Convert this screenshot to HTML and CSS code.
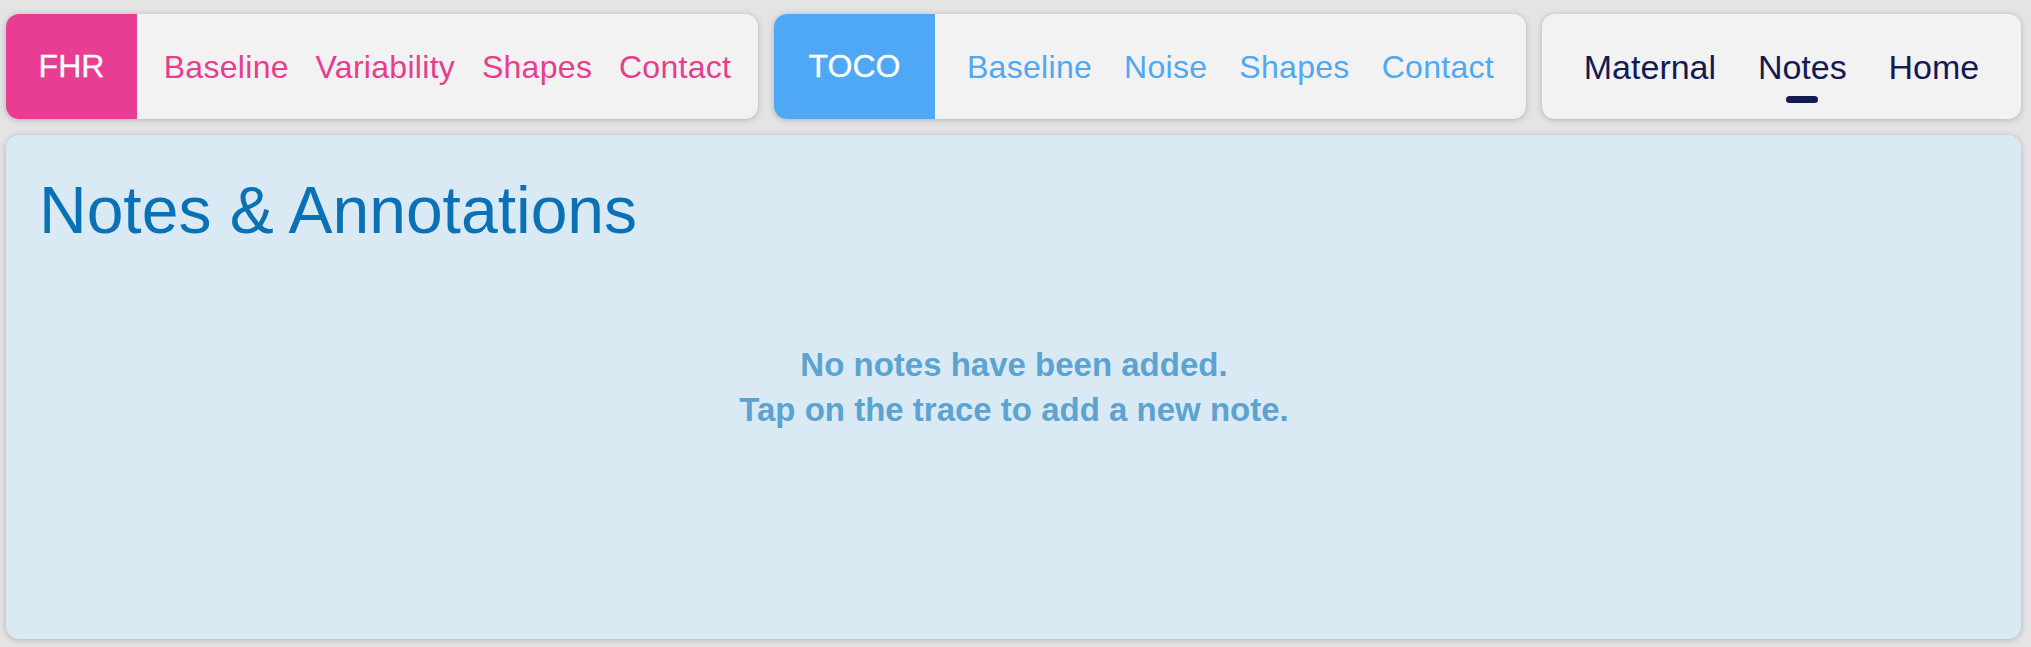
FILE: index.html
```html
<!DOCTYPE html>
<html lang="en">
<head>
    <meta charset="UTF-8">
    <title>Notes &amp; Annotations</title>
    <link rel="stylesheet" href="styles.css">
</head>
<body>

<div class="topbar">
  <div class="card card-fhr">
    <div class="tag tag-fhr">FHR</div>
    <div class="links links-fhr">
      <span>Baseline</span>
      <span>Variability</span>
      <span>Shapes</span>
      <span>Contact</span>
    </div>
  </div>

  <div class="card card-toco">
    <div class="tag tag-toco">TOCO</div>
    <div class="links links-toco">
      <span>Baseline</span>
      <span>Noise</span>
      <span>Shapes</span>
      <span>Contact</span>
    </div>
  </div>

  <div class="card card-nav">
    <div class="links links-nav">
      <span>Maternal</span>
      <span class="active">Notes</span>
      <span>Home</span>
    </div>
  </div>
</div>

<div class="panel">
  <h1>Notes &amp; Annotations</h1>
  <div class="empty">
    No notes have been added.<br>
    Tap on the trace to add a new note.
  </div>
</div>

</body>
</html>
```

FILE: styles.css
```css
body {
	margin: 0;
	padding: 14px 10px 8px 6px;
	background: #e4e4e4;
	font-family: "Liberation Sans", Arial, sans-serif;
}
.topbar {
	display: flex;
	gap: 16px;
}
.card {
	display: flex;
	height: 105px;
	background: #f2f2f2;
	border-radius: 13px;
	overflow: hidden;
	box-shadow: 0 1px 6px rgba(0, 0, 0, 0.22);
}
.card-fhr,
.card-toco {
	width: 752px;
	flex: none;
}
.card-nav {
	flex: 1;
}
.tag {
	display: flex;
	align-items: center;
	justify-content: center;
	color: #fff;
	font-size: 32px;
	-webkit-text-stroke: 0.3px #fff;
	flex: none;
}
.tag-fhr {
	width: 131px;
	background: #e83d93;
}
.tag-toco {
	width: 161px;
	background: #4fa8f5;
}
.links {
	flex: 1;
	display: flex;
	align-items: center;
	justify-content: space-evenly;
	font-size: 32px;
	line-height: 1;
	letter-spacing: 0.3px;
	padding-top: 1px;
}
.links-fhr {
	color: #e83d8e;
}
.links-toco {
	color: #4fa8f2;
}
.links-nav {
	color: #141a52;
	font-size: 34px;
	letter-spacing: 0;
	padding-top: 0;
}
.links span {
	position: relative;
}
/* little bar under the current tab */
.links .active::after {
	content: "";
	position: absolute;
	left: 50%;
	margin-left: -16px;
	top: 46px;
	width: 32px;
	height: 7px;
	border-radius: 4px;
	background: #141a52;
}
.panel {
	margin-top: 16px;
	height: 504px;
	box-sizing: border-box;
	padding: 35px 32px 0 33px;
	background: #d9eaf4;
	border-radius: 13px;
	box-shadow: 0 1px 6px rgba(0, 0, 0, 0.22);
}
h1 {
	margin: 0;
	font-size: 66px;
	line-height: 80px;
	font-weight: normal;
	color: #0a71b7;
}
.empty {
	margin-top: 92px;
	text-align: center;
	font-size: 33px;
	line-height: 45px;
	font-weight: bold;
	color: #5ca3d1;
}
```
